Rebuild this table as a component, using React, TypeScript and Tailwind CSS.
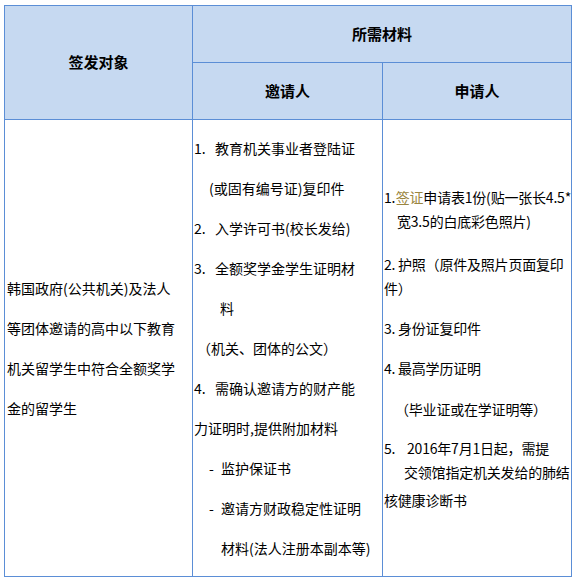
export default function App() {
  const font = { fontFamily: '"Noto Sans CJK SC", "Noto Sans", sans-serif' };

  return (
    <div className="w-[578px] h-[584px] bg-white pt-[5px] pl-1 text-black" style={font}>
      <div className="w-[568px] border border-[#5b8ed6] grid grid-cols-[188px_190px_188px] grid-rows-[57px_57px_456px]">
        {/* header */}
        <div className="row-span-2 bg-[#c6d9f1] border-r border-b border-[#5b8ed6] flex items-center justify-center text-[15px] font-bold">
          签发对象
        </div>
        <div className="col-span-2 bg-[#c6d9f1] border-b border-[#5b8ed6] flex items-center justify-center text-[15px] font-bold">
          所需材料
        </div>
        <div className="bg-[#c6d9f1] border-r border-b border-[#5b8ed6] flex items-center justify-center text-[15px] font-bold">
          邀请人
        </div>
        <div className="bg-[#c6d9f1] border-b border-[#5b8ed6] flex items-center justify-center text-[15px] font-bold">
          申请人
        </div>

        {/* 签发对象 */}
        <div className="border-r border-[#5b8ed6] flex flex-col justify-center pl-[2px] text-[14px] leading-[40px] whitespace-nowrap">
          <div>韩国政府(公共机关)及法人</div>
          <div>等团体邀请的高中以下教育</div>
          <div>机关留学生中符合全额奖学</div>
          <div>金的留学生</div>
        </div>

        {/* 邀请人 */}
        <div className="border-r border-[#5b8ed6] flex flex-col justify-center text-[14px] leading-[40px] whitespace-nowrap">
          <div className="flex pl-px">
            <span className="w-[21px]">1.</span>
            <span>教育机关事业者登陆证</span>
          </div>
          <div className="pl-[16px]">(或固有编号证)复印件</div>
          <div className="flex pl-px">
            <span className="w-[21px]">2.</span>
            <span>入学许可书(校长发给)</span>
          </div>
          <div className="flex pl-px">
            <span className="w-[21px]">3.</span>
            <span>全额奖学金学生证明材</span>
          </div>
          <div className="pl-[27px]">料</div>
          <div className="pl-[4px]">（机关、团体的公文）</div>
          <div className="flex pl-px">
            <span className="w-[21px]">4.</span>
            <span>需确认邀请方的财产能</span>
          </div>
          <div className="pl-px">力证明时,提供附加材料</div>
          <div className="flex pl-[16px]">
            <span className="w-[12px]">-</span>
            <span>监护保证书</span>
          </div>
          <div className="flex pl-[16px]">
            <span className="w-[12px]">-</span>
            <span>邀请方财政稳定性证明</span>
          </div>
          <div className="pl-[28px]">材料(法人注册本副本等)</div>
        </div>

        {/* 申请人 */}
        <div className="flex flex-col justify-center text-[14px] leading-[24px] whitespace-nowrap tracking-[-0.2px]">
          <div className="flex pl-px">
            <span className="w-[14px]">1.</span>
            <span>
              <span className="text-[#9a8540]">签证</span>申请表1份(贴一张长4.5*
            </span>
          </div>
          <div className="pl-[14px]">宽3.5的白底彩色照片)</div>
          <div className="flex pl-px mt-[19px]">
            <span className="w-[14px]">2.</span>
            <span>护照（原件及照片页面复印</span>
          </div>
          <div className="pl-px">件）</div>
          <div className="flex pl-px mt-4">
            <span className="w-[14px]">3.</span>
            <span>身份证复印件</span>
          </div>
          <div className="flex pl-px mt-4">
            <span className="w-[14px]">4.</span>
            <span>最高学历证明</span>
          </div>
          <div className="pl-[12px] mt-[17px]">（毕业证或在学证明等）</div>
          <div className="flex pl-px mt-[15px]">
            <span className="w-[23px]">5.</span>
            <span>2016年7月1日起，需提</span>
          </div>
          <div className="pl-[21px]">交领馆指定机关发给的肺结</div>
          <div className="pl-px mt-1">核健康诊断书</div>
        </div>
      </div>
    </div>
  );
}
